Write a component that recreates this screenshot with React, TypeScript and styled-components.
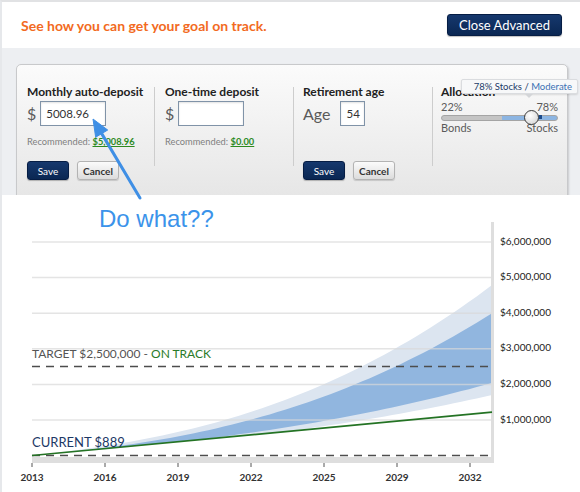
import React from "react";
import styled, { createGlobalStyle } from "styled-components";

const Global = createGlobalStyle`
  html, body { margin: 0; padding: 0; background: #fff; }
  body {
    font-family: Lato, "Open Sans", Arial, sans-serif;
    width: 580px; height: 492px; overflow: hidden;
  }
  * { box-sizing: border-box; }
`;

const Page = styled.div`
  position: relative;
  width: 580px;
  height: 492px;
  border-top: 2px solid #e1e2e4;
  border-left: 2px solid #e6e8eb;
  display: flex;
  flex-direction: column;
  overflow: hidden;
`;

const Header = styled.header`
  height: 46px;
  flex: none;
  display: flex;
  align-items: center;
  justify-content: space-between;
  padding: 0 18px 0 19px;
  background: #fff;
`;

const Title = styled.h1`
  margin: 0;
  font-size: 14px;
  font-weight: 700;
  color: #f26a22;
`;

const PrimaryButton = styled.button<{ $size?: "lg" | "sm" }>`
  font-family: Lato, Arial, sans-serif;
  color: #fff;
  border: 1px solid #061d44;
  border-radius: 3px;
  background: linear-gradient(#16386d, #0a2753);
  box-shadow: 0 1px 1px rgba(0, 0, 0, 0.25);
  cursor: pointer;
  padding: 0;
  width: ${(p) => (p.$size === "lg" ? "115px" : "42px")};
  height: ${(p) => (p.$size === "lg" ? "22px" : "19px")};
  font-size: ${(p) => (p.$size === "lg" ? "13px" : "10px")};
`;

const SecondaryButton = styled.button`
  font-family: Lato, Arial, sans-serif;
  font-weight: 700;
  color: #333;
  width: 42px;
  height: 19px;
  padding: 0;
  font-size: 10px;
  border: 1px solid #b3b3b3;
  border-radius: 3px;
  background: linear-gradient(#fbfbfb, #dcdcdc);
  box-shadow: 0 1px 1px rgba(0, 0, 0, 0.15);
`;

const Advanced = styled.section`
  height: 147px;
  flex: none;
  background: #edeff2;
  padding: 16px 0 0 14px;
  overflow: hidden;
`;

const Panel = styled.div`
  width: 552px;
  height: 160px;
  border: 1px solid #c8c9cb;
  border-radius: 5px;
  background: linear-gradient(#fbfbfb, #e2e2e2);
  box-shadow: 1px 1px 2px rgba(0, 0, 0, 0.15);
  padding-top: 20px;
  display: flex;
`;

const Column = styled.div<{ $width: number; $divider?: boolean; $pad: number }>`
  position: relative;
  width: ${(p) => p.$width}px;
  flex: none;
  height: 95px;
  padding-left: ${(p) => p.$pad}px;
  display: flex;
  flex-direction: column;
  background: ${(p) =>
    p.$divider ? "linear-gradient(#cdcdcd, #cdcdcd) no-repeat 0 2px / 1px 79px" : "none"};
`;

const Heading = styled.div`
  font-size: 12px;
  line-height: 14px;
  font-weight: 700;
  color: #222;
  white-space: nowrap;
`;

const FieldRow = styled.div<{ $gap: number }>`
  margin-top: 2px;
  display: flex;
  align-items: center;
  gap: ${(p) => p.$gap}px;
  height: 25px;
`;

const Unit = styled.span`
  font-size: 16px;
  color: #5a5a5a;
`;

const Input = styled.input<{ $width: number }>`
  width: ${(p) => p.$width}px;
  height: 25px;
  border: 1px solid #8093a8;
  box-shadow: inset 0 1px 2px rgba(0, 0, 0, 0.12);
  background: #fff;
  font-family: Lato, Arial, sans-serif;
  font-size: 11.5px;
  color: #333;
  padding: 0 0 0 5px;
  outline: none;
`;

const Recommended = styled.div`
  margin-top: 10px;
  font-size: 9.3px;
  line-height: 12px;
  color: #808080;
  white-space: nowrap;
`;

const RecLink = styled.a`
  color: #2d8a1f;
  font-weight: 700;
  text-decoration: underline;
`;

const ButtonRow = styled.div`
  margin-top: auto;
  display: flex;
  gap: 8px;
`;

const Tooltip = styled.div`
  position: absolute;
  top: -6px;
  left: 29px;
  width: 117px;
  height: 15px;
  background: #f7f8f9;
  border: 1px solid #dadcdf;
  border-radius: 2px;
  box-shadow: 0 1px 2px rgba(0, 0, 0, 0.12);
  font-size: 9.5px;
  line-height: 13px;
  text-align: right;
  padding-right: 5px;
  color: #1c3a68;
  white-space: nowrap;
  z-index: 2;
  &::after {
    content: "";
    position: absolute;
    left: 63px;
    bottom: -5px;
    border-left: 4px solid transparent;
    border-right: 4px solid transparent;
    border-top: 4px solid #d3d5d8;
  }
`;

const Moderate = styled.span`
  color: #3a70b4;
`;

const EndRow = styled.div<{ $top: number }>`
  margin-top: ${(p) => p.$top}px;
  width: 117px;
  display: flex;
  justify-content: space-between;
  font-size: 11px;
  line-height: 12px;
  color: #5a5a5a;
`;

const Track = styled.div`
  position: relative;
  margin-top: 2px;
  width: 117px;
  height: 6px;
  border: 1px solid #a4a4a4;
  border-radius: 3px;
  background: linear-gradient(to right, #c4c4c4 0 52%, #8cb5e2 52% 100%);
`;

const Knob = styled.div`
  position: absolute;
  top: -6px;
  width: 15px;
  height: 15px;
  margin-left: -7.5px;
  border-radius: 50%;
  border: 1px solid #3c3c3c;
  background: radial-gradient(circle at 40% 35%, #ffffff, #cfcfcf);
  &::after {
    content: "";
    position: absolute;
    left: 14px;
    top: 4px;
    width: 3px;
    height: 4px;
    background: #1d4b8a;
  }
`;

const ChartSection = styled.section`
  flex: 1;
  background: #fff;
  display: grid;
`;

const Annotation = styled.div`
  grid-area: 1 / 1;
  align-self: start;
  justify-self: start;
  margin: 10px 0 0 97px;
  font-family: "Liberation Sans", Arial, sans-serif;
  font-size: 24px;
  line-height: 28px;
  color: #3b93ea;
  z-index: 1;
`;

const ChartSvg = styled.svg`
  grid-area: 1 / 1;
  display: block;
  font-family: Lato, Arial, sans-serif;
`;

const Overlay = styled.svg`
  position: absolute;
  left: -2px;
  top: -2px;
  pointer-events: none;
  z-index: 5;
`;

const X0 = 32;
const X1 = 492;
const Y0 = 455.6;
const K = 35.6;
const yv = (v: number) => Y0 - v * K;
const green = (t: number) => 1.22 * t;
const curve = (a: number, b: number) => (t: number) => Math.max(green(t), a * t + b * Math.pow(t, 2.5));

const pts = (f: (t: number) => number) =>
  Array.from({ length: 61 }, (_, i) => {
    const t = i / 60;
    return [X0 + t * (X1 - X0), yv(f(t))] as [number, number];
  });

const band = (top: (t: number) => number, bottom: (t: number) => number) => {
  const a = pts(top);
  const b = pts(bottom).reverse();
  return "M" + [...a, ...b].map((p) => p[0].toFixed(1) + "," + p[1].toFixed(1)).join("L") + "Z";
};

const outer = band(curve(1.5, 3.29), curve(0.9, 0.8));
const inner = band(curve(1.2, 2.8), curve(1.02, 1.02));

const yLabels = ["$1,000,000", "$2,000,000", "$3,000,000", "$4,000,000", "$5,000,000", "$6,000,000"];
const years = ["2013", "2016", "2019", "2022", "2025", "2029", "2032"];

function Chart() {
  return (
    <ChartSvg width={578} height={297} viewBox="2 195 578 297">
      <path d={outer} fill="#dce5f0" />
      <path d={inner} fill="#91b6df" />
      {yLabels.map((l, i) => {
        const y = yv(i + 1);
        return (
          <g key={l}>
            <line x1={X0} x2={491} y1={y} y2={y} stroke="#d9d9d9" strokeOpacity={0.7} strokeWidth={1.5} />
            <text x={500} y={y} dominantBaseline="middle" fontSize={10} fill="#222">
              {l}
            </text>
          </g>
        );
      })}
      <line x1={X0} x2={491} y1={yv(2.5)} y2={yv(2.5)} stroke="#4d4d4d" strokeWidth={1.5} strokeDasharray="8 6" />
      <rect x={X0} y={457} width={462} height={6} fill="#dedede" />
      <rect x={491} y={222} width={3} height={241} fill="#dedede" />
      <line x1={X0} x2={491} y1={455.5} y2={455.5} stroke="#4d4d4d" strokeWidth={1.5} strokeDasharray="8 6" />
      <line x1={X0} y1={455.5} x2={X1} y2={yv(1.22)} stroke="#247324" strokeWidth={1.6} />
      {years.map((yr, i) => {
        const x = X0 + i * 73;
        return (
          <g key={yr}>
            <line x1={x} x2={x} y1={463} y2={467} stroke="#555" strokeWidth={1} />
            <text x={x} y={478} textAnchor="middle" dominantBaseline="middle" fontSize={10} fontWeight={700} fill="#333">
              {yr}
            </text>
          </g>
        );
      })}
      <text x={X0} y={355} dominantBaseline="middle" fontSize={12} fill="#555">
        TARGET $2,500,000 - <tspan fill="#2a7b2a">ON TRACK</tspan>
      </text>
      <text x={X0} y={444} dominantBaseline="middle" fontSize={13} fill="#1c3866">
        CURRENT $889
      </text>
    </ChartSvg>
  );
}

function Arrow() {
  const tip = [93, 119];
  const tail = [140, 198];
  const dx = tip[0] - tail[0];
  const dy = tip[1] - tail[1];
  const len = Math.hypot(dx, dy);
  const u = [dx / len, dy / len];
  const base = [tip[0] - 17 * u[0], tip[1] - 17 * u[1]];
  const p = [-u[1], u[0]];
  const c1 = [base[0] + 7 * p[0], base[1] + 7 * p[1]];
  const c2 = [base[0] - 7 * p[0], base[1] - 7 * p[1]];
  return (
    <Overlay width={580} height={492} viewBox="0 0 580 492">
      <line x1={tail[0]} y1={tail[1]} x2={base[0]} y2={base[1]} stroke="#3f8fe5" strokeWidth={3} strokeLinecap="round" />
      <polygon points={`${tip[0]},${tip[1]} ${c1[0]},${c1[1]} ${c2[0]},${c2[1]}`} fill="#3f8fe5" stroke="#3f8fe5" strokeWidth={1} strokeLinejoin="round" />
    </Overlay>
  );
}

export default function App() {
  const stocks = 78;
  return (
    <Page>
      <Global />
      <Header>
        <Title>See how you can get your goal on track.</Title>
        <PrimaryButton $size="lg">Close Advanced</PrimaryButton>
      </Header>
      <Advanced>
        <Panel>
          <Column $width={137} $pad={10}>
            <Heading>Monthly auto-deposit</Heading>
            <FieldRow $gap={4}>
              <Unit>$</Unit>
              <Input $width={66} defaultValue="5008.96" />
            </FieldRow>
            <Recommended>
              Recommended: <RecLink>$5,008.96</RecLink>
            </Recommended>
            <ButtonRow>
              <PrimaryButton>Save</PrimaryButton>
              <SecondaryButton>Cancel</SecondaryButton>
            </ButtonRow>
          </Column>
          <Column $width={139} $pad={11} $divider>
            <Heading>One-time deposit</Heading>
            <FieldRow $gap={4}>
              <Unit>$</Unit>
              <Input $width={66} defaultValue="" />
            </FieldRow>
            <Recommended>
              Recommended: <RecLink>$0.00</RecLink>
            </Recommended>
          </Column>
          <Column $width={139} $pad={10} $divider>
            <Heading>Retirement age</Heading>
            <FieldRow $gap={10}>
              <Unit>Age</Unit>
              <Input $width={25} defaultValue="54" />
            </FieldRow>
            <ButtonRow>
              <PrimaryButton>Save</PrimaryButton>
              <SecondaryButton>Cancel</SecondaryButton>
            </ButtonRow>
          </Column>
          <Column $width={135} $pad={9} $divider>
            <Heading>Allocation</Heading>
            <Tooltip>
              78% Stocks / <Moderate>Moderate</Moderate>
            </Tooltip>
            <EndRow $top={2}>
              <span>22%</span>
              <span>78%</span>
            </EndRow>
            <Track>
              <Knob style={{ left: `${stocks}%` }} />
            </Track>
            <EndRow $top={1}>
              <span>Bonds</span>
              <span>Stocks</span>
            </EndRow>
          </Column>
        </Panel>
      </Advanced>
      <ChartSection>
        <Annotation>Do what??</Annotation>
        <Chart />
      </ChartSection>
      <Arrow />
    </Page>
  );
}
